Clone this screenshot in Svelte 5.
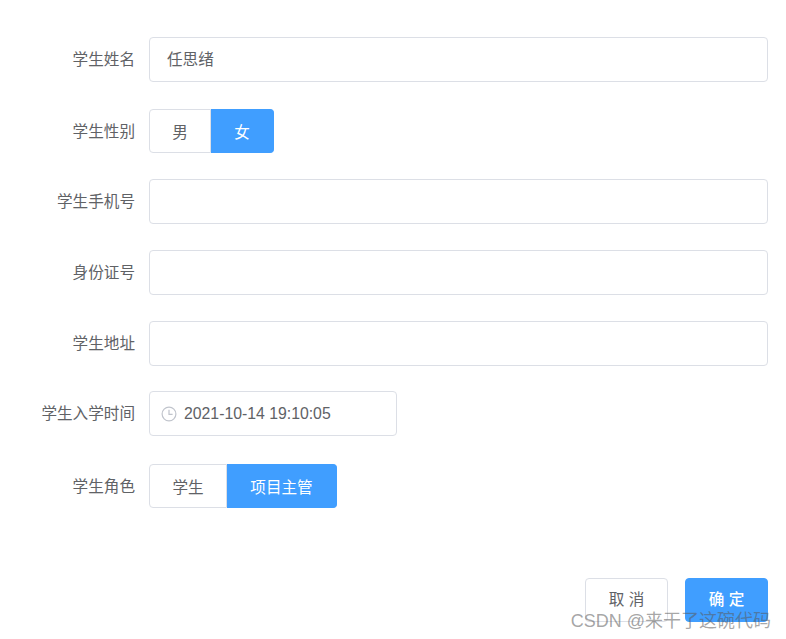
<script>
  const name = "任思绪"
  const time = "2021-10-14 19:10:05"
</script>

<div class="dialog">
  <form class="form">
    <div class="row">
      <span class="label">学生姓名</span>
      <div class="input">{name}</div>
    </div>
    <div class="row">
      <span class="label">学生性别</span>
      <div class="radios">
        <span class="radio sex">男</span>
        <span class="radio sex active">女</span>
      </div>
    </div>
    <div class="row">
      <span class="label">学生手机号</span>
      <div class="input"></div>
    </div>
    <div class="row">
      <span class="label">身份证号</span>
      <div class="input"></div>
    </div>
    <div class="row">
      <span class="label">学生地址</span>
      <div class="input"></div>
    </div>
    <div class="row">
      <span class="label">学生入学时间</span>
      <div class="date">
        <svg class="clock" viewBox="0 0 16 16" width="16" height="16" fill="none" stroke="#c0c4cc" stroke-width="1.2">
          <circle cx="8" cy="8" r="6.9" />
          <path d="M8 3.8V8.4H11.6" />
        </svg>
        <span class="date-text">{time}</span>
      </div>
    </div>
    <div class="row">
      <span class="label">学生角色</span>
      <div class="radios">
        <span class="radio role-a">学生</span>
        <span class="radio role-b active">项目主管</span>
      </div>
    </div>
  </form>

  <div class="footer">
    <button type="button" class="btn">取 消</button>
    <button type="button" class="btn primary">确 定</button>
  </div>

  <div class="watermark">CSDN @来干了这碗代码</div>
</div>

<style>
  :global(body) {
    margin: 0;
    background: #fff;
  }

  .dialog {
    position: relative;
    width: 786px;
    height: 639px;
    overflow: hidden;
    box-sizing: border-box;
    padding: 37px 18px 0 0;
    font-family: "Liberation Sans", "Noto Sans CJK SC", sans-serif;
    color: #606266;
    font-size: 15.6px;
  }

  .form {
    display: flex;
    flex-direction: column;
  }

  .row {
    display: flex;
    align-items: flex-start;
    min-height: 44px;
    margin-bottom: 26px;
  }

  .row:nth-child(1) {
    margin-bottom: 27px;
  }

  .row:nth-child(5) {
    margin-bottom: 25px;
  }

  .row:nth-child(6) {
    margin-bottom: 28px;
  }

  .label {
    width: 135px;
    height: 44px;
    margin-right: 14px;
    flex: none;
    text-align: right;
    line-height: 45px;
  }

  .input {
    flex: 1;
    height: 45px;
    box-sizing: border-box;
    min-width: 0;
    border: 1px solid #dcdfe6;
    border-radius: 4px;
    padding: 0 17px;
    line-height: 43px;
  }

  .radios {
    display: flex;
    height: 44px;
  }

  .radio {
    display: flex;
    align-items: center;
    justify-content: center;
    box-sizing: border-box;
    border: 1px solid #dcdfe6;
    border-left-width: 0;
  }

  .radio:first-child {
    border-left-width: 1px;
    border-radius: 4px 0 0 4px;
  }

  .radio:last-child {
    border-radius: 0 4px 4px 0;
  }

  .radio.active {
    background: #409eff;
    border-color: #409eff;
    color: #fff;
  }

  .sex {
    width: 62px;
  }

  .sex.active {
    width: 63px;
  }

  .role-a {
    width: 78px;
  }

  .role-b {
    width: 110px;
  }

  .date {
    display: flex;
    align-items: center;
    width: 248px;
    height: 45px;
    box-sizing: border-box;
    border: 1px solid #dcdfe6;
    border-radius: 4px;
    padding-left: 11px;
  }

  .clock {
    flex: none;
  }

  .date-text {
    margin-left: 7px;
    font-size: 15.8px;
    white-space: nowrap;
  }

  .footer {
    display: flex;
    justify-content: flex-end;
    gap: 17px;
    margin-top: 44px;
  }

  .btn {
    width: 83px;
    height: 44px;
    box-sizing: border-box;
    border: 1px solid #dcdfe6;
    border-radius: 4px;
    background: #fff;
    color: #606266;
    font: inherit;
    padding: 0 0 4px;
  }

  .btn.primary {
    background: #409eff;
    border-color: #409eff;
    color: #fff;
    font-weight: 500;
  }

  .watermark {
    position: absolute;
    right: 15px;
    top: 609px;
    font-size: 18px;
    line-height: 24px;
    color: rgba(90, 90, 90, 0.55);
    white-space: nowrap;
  }
</style>
